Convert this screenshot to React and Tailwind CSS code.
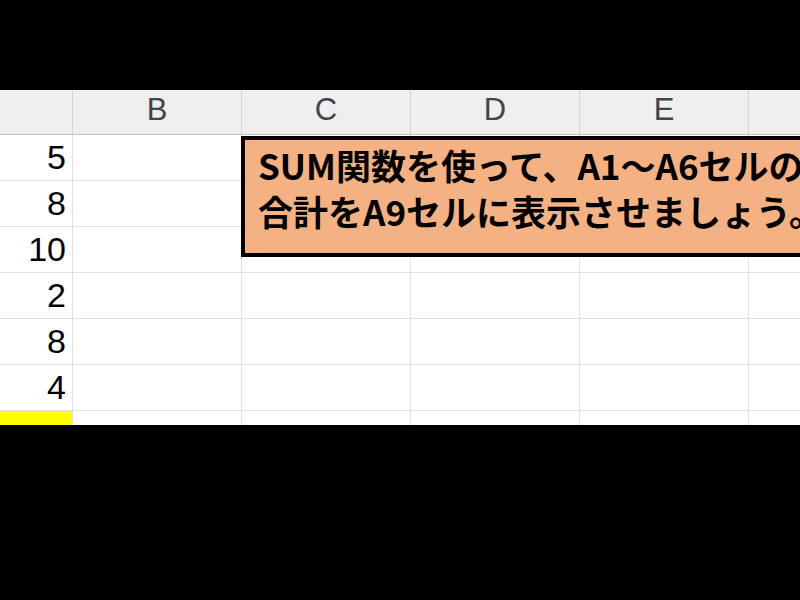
const cols = ["A", "B", "C", "D", "E", "F"];
const values = [5, 8, 10, 2, 8, 4];

function HeaderCell({ label, selected }) {
  return (
    <div
      className={`h-[45px] flex items-end justify-center pb-[4px] border-r border-b border-r-[#d4d4d4] border-b-[#c4c4c4] bg-[#efefef] text-[31px] leading-[40px] ${
        selected ? "text-[#4a90d0]" : "text-[#444]"
      }`}
    >
      {label}
    </div>
  );
}

function Cell({ children, yellow }) {
  return (
    <div
      className={`h-[46px] flex items-end justify-end pr-[6px] pb-[3px] border-r border-b border-[#e0e0e0] text-[34px] leading-[40px] text-black ${
        yellow ? "bg-[#ffff00]" : "bg-white"
      }`}
    >
      {children}
    </div>
  );
}

export default function App() {
  return (
    <div
      className="w-[800px] h-[600px] bg-black overflow-hidden relative"
      style={{ fontFamily: '"Liberation Sans", Arial, sans-serif' }}
    >
      <div className="mt-[90px] h-[335px] overflow-hidden bg-white">
        <div className="ml-[-96px] w-[1000px] grid grid-cols-[169px_169px_169px_169px_169px_155px]">
          {cols.map((c) => (
            <HeaderCell key={c} label={c} selected={c === "A"} />
          ))}
          {values.map((v, i) =>
            cols.map((c) => (
              <Cell key={`${c}${i}`}>{c === "A" ? v : null}</Cell>
            ))
          )}
          {cols.map((c) => (
            <Cell key={`${c}-last`} yellow={c === "A"} />
          ))}
        </div>
      </div>

      {/* instruction callout */}
      <div
        className="absolute left-[241px] top-[136px] w-[640px] h-[121px] border-4 border-black bg-[#f4b183] pl-[13px] pt-[2px] text-[35px] leading-[46px] font-bold text-black whitespace-nowrap"
        style={{ fontFamily: '"Noto Sans CJK JP", "Noto Sans", sans-serif' }}
      >
        <div>SUM関数を使って、A1～A6セルの</div>
        <div>合計をA9セルに表示させましょう。</div>
      </div>
    </div>
  );
}
